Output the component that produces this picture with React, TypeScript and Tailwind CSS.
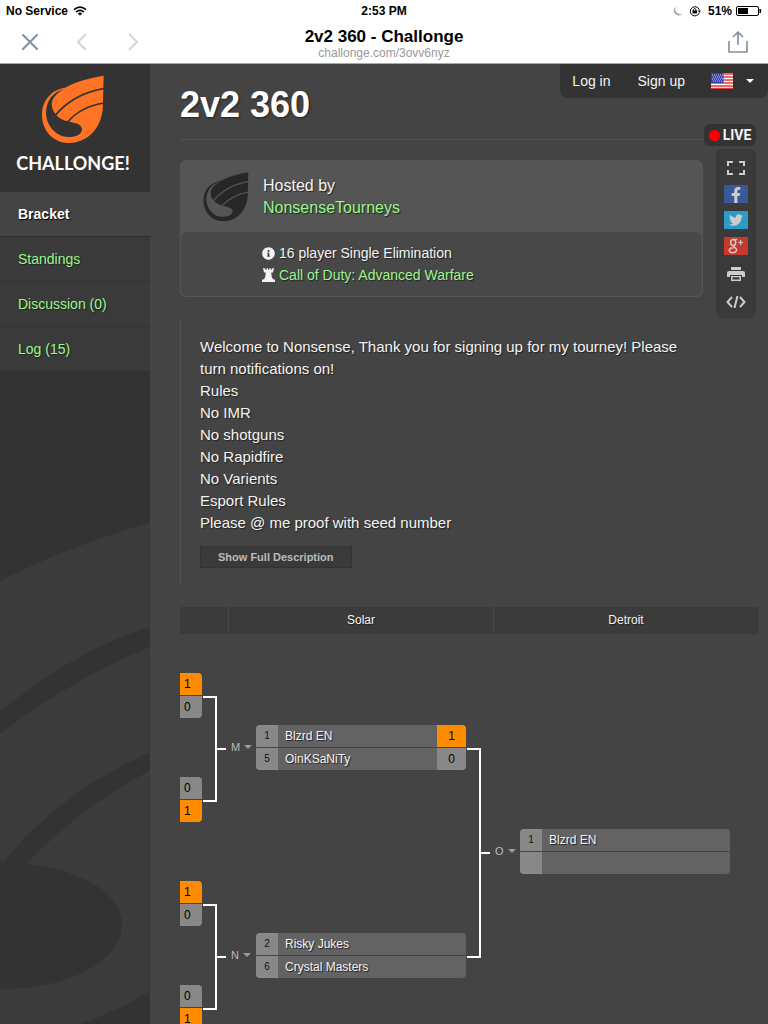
import React from "react";
import { FaFacebookF, FaInfoCircle, FaTwitter } from "react-icons/fa";

type Player = { seed?: number; name?: string; score?: number; won?: boolean };

const tabs = [
  { label: "Standings", href: "#standings" },
  { label: "Discussion (0)", href: "#discussion" },
  { label: "Log (15)", href: "#log" },
];

const description = [
  "Welcome to Nonsense, Thank you for signing up for my tourney! Please turn notifications on!",
  "Rules",
  "No IMR",
  "No shotguns",
  "No Rapidfire",
  "No Varients",
  "Esport Rules",
  "Please @ me proof with seed number",
];

const firstRound = [
  [1, 0],
  [0, 1],
  [1, 0],
  [0, 1],
];

const semis: { id: string; players: Player[] }[] = [
  {
    id: "M",
    players: [
      { seed: 1, name: "Blzrd EN", score: 1, won: true },
      { seed: 5, name: "OinKSaNiTy", score: 0 },
    ],
  },
  {
    id: "N",
    players: [
      { seed: 2, name: "Risky Jukes" },
      { seed: 6, name: "Crystal Masters" },
    ],
  },
];

const Leaf = ({ className, line }: { className: string; line: string }) => (
  <svg viewBox="120 30 198 210" className={className} aria-hidden="true">
    <path
      fill="currentColor"
      d="M311 35C268 42 230 52 195 71C151 78 126 112 126 152C126 202 162 237 207 237C264 237 310 190 309 118Z"
    />
    <path
      fill={line}
      d="M197 73C160 82 138 110 138 148C140 188 170 219 205 219C230 219 247 210 246 194C243 178 218 177 202 172C178 166 156 148 155 120C156 102 175 82 197 73Z"
    />
    <path
      d="M166 154C204 108 250 84 313 73M203 174C232 140 266 124 313 117"
      fill="none"
      stroke={line}
      strokeWidth="5"
    />
  </svg>
);

const StatusBar = () => (
  <div className="grid h-5 grid-cols-3 items-center px-[6px] pt-[2px] text-xs font-bold text-black">
    <div className="flex items-center gap-[5px]">
      No Service
      <svg viewBox="0 0 14 10" className="h-[10px] w-[14px]" fill="none" stroke="black" strokeWidth="1.7">
        <path d="M1 3.7Q7 -1.6 13 3.7M3.2 6Q7 2.8 10.8 6" />
        <path d="M7 9.6L4.8 7.4Q7 5.8 9.2 7.4Z" fill="black" stroke="none" />
      </svg>
    </div>
    <div className="text-center">2:53 PM</div>
    <div className="flex items-center justify-end gap-[6px]">
      <svg viewBox="0 0 10 10" className="size-[10px]" fill="#aaa">
        <path d="M3 .5A4.8 4.8 0 1 0 9.4 7.4A4.9 4.9 0 0 1 3 .5Z" />
      </svg>
      <svg viewBox="0 0 12 12" className="size-3" fill="none" stroke="black">
        <path d="M10.3 7.8A4.6 4.6 0 1 1 10.3 4.8" />
        <path d="M8.6 5.6H12L10.3 7.8Z" fill="black" stroke="none" />
        <path d="M3.5 5.4H8V8.4H3.5Z" fill="black" stroke="none" />
        <path d="M4.4 5.6V4.4Q5.7 2.6 7 4.4V5.6" />
      </svg>
      <span className="pl-px">51%</span>
      <svg viewBox="0 0 26 10" className="-ml-[2px] h-[10px] w-[26px]">
        <rect x="0.5" y="0.5" width="22" height="9" rx="1.5" fill="none" stroke="black" />
        <rect x="2" y="2" width="10" height="6" fill="black" />
        <path d="M24 3Q25.6 5 24 7Z" fill="black" stroke="black" />
      </svg>
    </div>
  </div>
);

const BrowserBar = () => (
  <div className="flex h-11 items-center justify-between border-b border-[#aaa] px-5">
    <div className="flex w-[122px] items-center justify-between">
      <button aria-label="Close" className="p-0.5">
        <svg viewBox="0 0 16 16" className="size-4 text-[#81909c]" fill="none" stroke="currentColor" strokeWidth="2" strokeLinecap="round">
          <path d="M1 1L15 15M15 1L1 15" />
        </svg>
      </button>
      <button aria-label="Back" className="p-1">
        <svg viewBox="0 0 10 18" className="h-[18px] w-[10px] text-[#d2d5da]" fill="none" stroke="currentColor" strokeWidth="2">
          <path d="M9 1L1 9L9 17" />
        </svg>
      </button>
      <button aria-label="Forward" className="p-1">
        <svg viewBox="0 0 10 18" className="h-[18px] w-[10px] text-[#d2d5da]" fill="none" stroke="currentColor" strokeWidth="2">
          <path d="M1 1L9 9L1 17" />
        </svg>
      </button>
    </div>
    <div className="pt-1 text-center">
      <div className="text-[17px] leading-[18px] font-bold text-black">2v2 360 - Challonge</div>
      <div className="text-xs leading-[14px] text-[#999]">challonge.com/3ovv6nyz</div>
    </div>
    <div className="flex w-[122px] justify-end">
      <button aria-label="Share">
        <svg viewBox="0 0 20 22" className="h-[22px] w-5 text-[#81909c]" fill="none" stroke="currentColor" strokeWidth="1.6">
          <path d="M1 10V21H19V10M10 14V1.5M5 6L10 1.2L15 6" />
        </svg>
      </button>
    </div>
  </div>
);

const Sidebar = () => (
  <aside className="relative w-[150px] shrink-0 bg-[#333]">
    <svg
      viewBox="0 60 450 1508"
      className="absolute bottom-0 left-0 h-[503px] w-[150px]"
      preserveAspectRatio="none"
      aria-hidden="true"
    >
      <path fill="#3b3b3b" d="M0 240Q220 128 450 66V1470Q350 1535 240 1568H0Z" />
      <path
        fill="#333"
        d="M0 632Q210 455 450 376V438Q220 532 0 698ZM0 1076H15Q190 865 450 754V808Q230 925 80 1088C260 1110 366 1180 366 1272C366 1370 220 1465 0 1463ZM240 1568Q350 1530 450 1470V1568Z"
      />
    </svg>
    <div className="relative">
      <a href="#home" className="flex h-32 flex-col items-center pt-[10px] pr-1">
        <Leaf className="h-[70px] w-[66px] text-[#ff7324]" line="#333" />
        <span className="mt-[7px] font-[Lato,sans-serif] text-[18px] leading-6 font-bold text-white">
          CHALLONGE!
        </span>
      </a>
      <nav className="text-sm">
        <a
          href="#bracket"
          className="flex h-[45px] items-center border-b border-[#2e2e2e] bg-[#444] px-[18px] font-bold text-white [text-shadow:1px_1px_1px_#000]"
        >
          Bracket
        </a>
        {tabs.map((tab) => (
          <a
            key={tab.label}
            href={tab.href}
            className="flex h-[45px] items-center border-b border-[#333] bg-[#3a3a3a] px-[18px] text-[#98f88c] [text-shadow:1px_1px_1px_#222]"
          >
            {tab.label}
          </a>
        ))}
      </nav>
    </div>
  </aside>
);

const Flag = () => (
  <svg viewBox="0 0 22 16" className="h-4 w-[22px]" aria-hidden="true">
    <rect width="22" height="16" fill="#fff" />
    <path
      d="M0 1H22M0 4H22M0 7H22M0 10H22M0 13H22M0 15.5H22"
      stroke="#e5383b"
      strokeWidth="1.5"
    />
    <rect width="12.5" height="10" fill="#3b3fae" />
    <path
      d="M1 2H12M2 4H12M1 6H12M2 8H12"
      stroke="#c9caf0"
      strokeDasharray="1 1"
    />
  </svg>
);

const Rook = () => (
  <svg viewBox="0 0 13 14" className="h-[14px] w-[13px]" fill="currentColor" aria-hidden="true">
    <path d="M1 0L3.2.6L3.4 1.8H4.5V.2H6V1.8H7.2V.2H8.7V1.8H9.6L9.9.6L12 0L11 4.6H9.2L9.8 9.2L11.4 11.4H13V14H0V11.4H1.6L3.2 9.2L3.8 4.6H2Z" />
  </svg>
);

const HostCard = () => (
  <section className="rounded-md border border-[#555] bg-[#555] [text-shadow:1px_1px_1px_#222]">
    <div className="flex h-[71px] items-center pl-[21px]">
      <Leaf className="h-[51px] w-12 text-[#272727]" line="#555" />
      <div className="ml-[13px] text-base leading-[22px]">
        <div>Hosted by</div>
        <a href="#host" className="text-[#98f88c]">
          NonsenseTourneys
        </a>
      </div>
    </div>
    <div className="rounded-md bg-[#484848] py-[10px] pl-[81px] text-sm leading-[22px]">
      <div className="flex items-center gap-1">
        <FaInfoCircle className="size-[13px]" />
        16 player Single Elimination
      </div>
      <div className="flex items-center gap-1">
        <Rook />
        <a href="#game" className="text-[#98f88c]">
          Call of Duty: Advanced Warfare
        </a>
      </div>
    </div>
  </section>
);

const ShareBar = () => (
  <div className="mt-[3px] ml-3 flex flex-col items-center gap-2 rounded-md bg-[#3a3a3a] pt-[10px] pb-[7px] text-[#ccc]">
    <button aria-label="Full screen" className="flex h-[18px] items-center">
      <svg viewBox="0 0 18 14" className="h-[14px] w-[18px]" fill="none" stroke="currentColor" strokeWidth="2">
        <path d="M1 5V1H6M12 1H17V5M17 9V13H12M6 13H1V9" />
      </svg>
    </button>
    <a href="#facebook" aria-label="Facebook" className="flex h-[18px] w-6 items-end justify-center bg-[#3b5998]">
      <FaFacebookF className="size-4" />
    </a>
    <a href="#twitter" aria-label="Twitter" className="flex h-[18px] w-6 items-center justify-center bg-[#2c9cc6]">
      <FaTwitter className="size-[14px]" />
    </a>
    <a href="#google" aria-label="Google Plus" className="flex h-[18px] w-6 items-center justify-center bg-[#c8382d]">
      <svg viewBox="0 0 16 16" className="size-4" fill="none" stroke="currentColor" strokeWidth="1.5">
        <ellipse cx="5.2" cy="4.6" rx="2.5" ry="3" />
        <path d="M5.5 1.4H9.2M6.8 7C4.6 8.6 6 8.8 7.4 10C10 12.4 7.8 14.7 4.8 14.7C1.6 14.7.4 12.4 2 10.9C3 9.9 4.8 9.7 6 9.8" />
        <path d="M12.6 2V7M10.1 4.5H15.1" strokeWidth="1.2" />
      </svg>
    </a>
    <button aria-label="Print" className="flex h-[22px] items-center">
      <svg viewBox="0 0 18 14" className="h-[14px] w-[18px]" fill="currentColor">
        <path d="M4 0H14V3H4ZM2 4H16Q18 4 18 6V10H15V8H3V10H0V6Q0 4 2 4ZM4 9H14V14H4ZM5.5 10.2V12.6H12.5V10.2Z" fillRule="evenodd" />
      </svg>
    </button>
    <button aria-label="Embed" className="flex h-[18px] items-center">
      <svg viewBox="0 0 20 12" className="h-3 w-5" fill="none" stroke="currentColor" strokeWidth="2">
        <path d="M6 1L1.5 6L6 11M14 1L18.5 6L14 11M11.5 0L8.5 12" />
      </svg>
    </button>
  </div>
);

const Match = ({ id, players }: { id: string; players: Player[] }) => (
  <div className="flex items-center">
    <button className="flex w-[30px] items-center gap-1 pl-[5px] text-[11px] text-[#bbb]">
      {id}
      <span className="border-x-4 border-t-4 border-x-transparent border-t-[#999]" />
    </button>
    <div className="flex w-[210px] flex-col gap-px overflow-hidden rounded-[4px] text-xs">
      {players.map((player, i) => (
        <div key={i} className="flex h-[22px] items-center bg-[#636363]">
          <span className="flex h-full w-[22px] items-center justify-center bg-[#888] text-[10px] text-[#111]">
            {player.seed}
          </span>
          <span className="flex-1 pl-[7px] [text-shadow:1px_1px_1px_#222]">{player.name}</span>
          {player.score !== undefined && (
            <span
              className={`flex h-full w-[29px] items-center justify-center text-black ${
                player.won ? "bg-[#ff8b00]" : "bg-[#888]"
              }`}
            >
              {player.score}
            </span>
          )}
        </div>
      ))}
    </div>
  </div>
);

const Bracket = () => (
  <div className="mt-[9px] flex h-[416px] shrink-0">
    <div className="flex flex-col justify-around text-xs text-black">
      {firstRound.map((scores, i) => (
        <div key={i} className="flex w-[22px] flex-col gap-px overflow-hidden rounded-r-[4px]">
          {scores.map((score, j) => (
            <span
              key={j}
              className={`h-[22px] pl-1 leading-[22px] ${score ? "bg-[#ff8b00]" : "bg-[#888]"}`}
            >
              {score}
            </span>
          ))}
        </div>
      ))}
    </div>
    <div className="ml-px flex flex-col">
      {semis.map((match) => (
        <div key={match.id} className="h-[208px] pt-[53px]">
          <div className="flex h-[106px] items-center">
            <div className="h-full w-[14px] border-y-2 border-r-2 border-white" />
            <div className="h-0.5 w-[9px] bg-white" />
          </div>
        </div>
      ))}
    </div>
    <div className="flex flex-col justify-around">
      {semis.map((match) => (
        <Match key={match.id} id={match.id} players={match.players} />
      ))}
    </div>
    <div className="ml-px pt-[105px]">
      <div className="flex h-[210px] items-center">
        <div className="h-full w-[14px] border-y-2 border-r-2 border-white" />
        <div className="h-0.5 w-[9px] bg-white" />
      </div>
    </div>
    <Match id="O" players={[{ seed: 1, name: "Blzrd EN" }, {}]} />
  </div>
);

const App = () => {
  return (
    <div className="flex h-screen flex-col overflow-hidden bg-white font-['Liberation_Sans',Arial,sans-serif]">
      <StatusBar />
      <BrowserBar />
      <div className="flex min-h-0 flex-1 bg-[#444] text-[#f4f4f4]">
        <Sidebar />
        <main className="flex min-w-0 flex-1 flex-col overflow-hidden pl-[30px]">
          <header className="flex h-[60px] shrink-0 items-start justify-between">
            <h1 className="pt-[21px] text-4xl leading-10 font-bold text-white [text-shadow:1px_1px_2px_#222]">
              2v2 360
            </h1>
            <nav className="flex h-[34px] items-center rounded-b-lg bg-[#333] pr-[14px] pl-3 text-sm">
              <a href="#login" className="mr-[27px]">
                Log in
              </a>
              <a href="#signup" className="mr-[26px]">
                Sign up
              </a>
              <button aria-label="Language" className="flex items-center gap-[13px]">
                <Flag />
                <span className="border-x-4 border-t-4 border-x-transparent border-t-white" />
              </button>
            </nav>
          </header>
          <div className="flex items-start gap-px pr-3">
            <div className="min-w-0 flex-1 pt-[15px]">
              <hr className="mb-5 border-[#505050]" />
              <HostCard />
              <section className="mt-[21px] border-l border-[#505050] px-[19px] pt-[18px] pb-[18px] text-[15px] leading-[22px] [text-shadow:1px_1px_1px_#222]">
                {description.map((line) => (
                  <p key={line}>{line}</p>
                ))}
                <button className="mt-3 block h-[22px] border border-[#333] bg-[#3a3a3a] px-[17px] text-[11px] leading-5 font-bold text-[#bbb]">
                  Show Full Description
                </button>
              </section>
            </div>
            <div className="w-[52px]">
              <div className="flex h-[22px] items-center justify-center gap-[3px] rounded-md bg-[#333] font-[Roboto,sans-serif] text-sm font-bold">
                <span className="size-[11px] rounded-full bg-[#f00]" />
                LIVE
              </div>
              <ShareBar />
            </div>
          </div>
          <div className="mt-[21px] mr-[10px] grid h-[27px] shrink-0 grid-cols-[48px_1fr_1fr] gap-px bg-[#484848] text-center text-xs leading-[26px] [text-shadow:1px_1px_1px_#222]">
            <div className="bg-[#3b3b3b]" />
            <div className="bg-[#3b3b3b]">Solar</div>
            <div className="bg-[#3b3b3b]">Detroit</div>
          </div>
          <Bracket />
        </main>
      </div>
    </div>
  );
};

export default App;
